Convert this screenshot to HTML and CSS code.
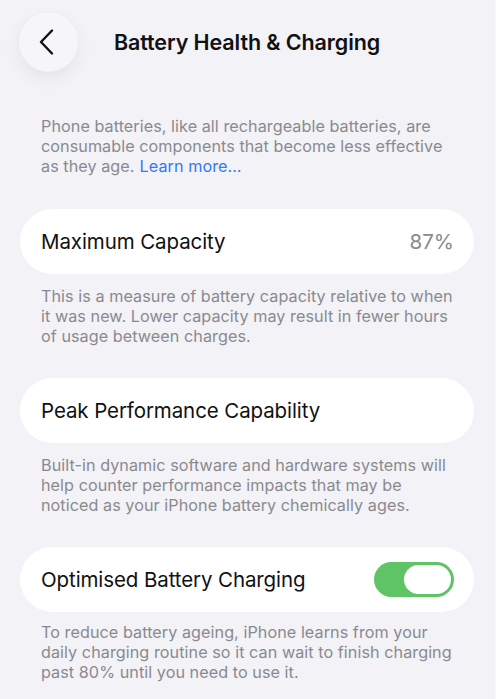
FILE: index.html
```html
<!DOCTYPE html>
<html lang="en">
<head>
    <meta charset="UTF-8">
    <meta name="viewport" content="width=device-width, initial-scale=1.0">
    <title>Battery Health &amp; Charging</title>
    <link rel="stylesheet" href="styles.css">
</head>
<body>
    <div class="screen">
        <header class="nav">
            <button class="back" aria-label="Back">
                <svg width="16" height="26" viewBox="0 0 16 26">
                    <path d="M13 1.5 L2 13 L13 24.5" fill="none" stroke="#111" stroke-width="2.4" stroke-linecap="round" stroke-linejoin="round"/>
                </svg>
            </button>
            <h1 class="title">Battery Health &amp; Charging</h1>
        </header>

        <p class="note intro">Phone batteries, like all rechargeable batteries, are consumable components that become less effective as they age.<a href="#" class="link">Learn more…</a></p>

        <section class="group first">
            <div class="row">
                <span class="label">Maximum Capacity</span>
                <span class="value">87%</span>
            </div>
            <p class="note">This is a measure of battery capacity relative to when it was new. Lower capacity may result in fewer hours of usage between charges.</p>
        </section>

        <section class="group">
            <div class="row">
                <span class="label">Peak Performance Capability</span>
            </div>
            <p class="note">Built-in dynamic software and hardware systems will help counter performance impacts that may be noticed as your iPhone battery chemically ages.</p>
        </section>

        <section class="group">
            <div class="row">
                <span class="label">Optimised Battery Charging</span>
                <span class="toggle on"><span class="knob"></span></span>
            </div>
            <p class="note">To reduce battery ageing, iPhone learns from your daily charging routine so it can wait to finish charging past 80% until you need to use it.</p>
        </section>
    </div>
</body>
</html>
```

FILE: styles.css
```css
html, body {
    margin: 0;
    height: 100%;
}
body {
    background-color: #f2f2f7;
    font-family: Inter, "Open Sans", sans-serif;
    color: #111;
    overflow: hidden;
}
.screen {
    padding: 0 21px 0 20px;
    border-right: 1px solid #f9f9fc;
    box-sizing: border-box;
    width: 496px;
    height: 100%;
}
.nav {
    display: flex;
    align-items: center;
    height: 56px;
    padding-top: 14px;
    position: relative;
}
.back {
    width: 57px;
    height: 57px;
    border-radius: 50%;
    border: none;
    background: #f6f6f8;
    box-shadow: 0 6px 18px rgba(0, 0, 0, 0.07), 0 0 0 1px rgba(255, 255, 255, 0.9);
    display: flex;
    align-items: center;
    justify-content: center;
    padding: 0 3px 0 0;
}
.title {
    position: absolute;
    left: 0;
    right: 0;
    top: 14px;
    line-height: 56px;
    text-align: center;
    margin: 0;
    font-size: 21.5px;
    font-weight: 600;
    letter-spacing: -0.1px;
    pointer-events: none;
}
.note {
    margin: 0;
    padding: 0 21px;
    font-size: 16.2px;
    line-height: 20px;
    color: #8a8a8e;
    letter-spacing: 0.05px;
}
.intro {
    margin-top: 46px;
}
.link {
    color: #3478f6;
    text-decoration: none;
    margin-left: 5px;
}
.group {
    margin-top: 32px;
}
.group.first {
    margin-top: 33px;
}
.group .note {
    margin-top: 12px;
}
.group:last-child .note {
    margin-top: 10px;
}
.row {
    background: #fff;
    border-radius: 33px;
    height: 65px;
    display: flex;
    align-items: center;
    justify-content: space-between;
    padding: 0 20px 0 21px;
}
.label {
    font-size: 20.5px;
    letter-spacing: -0.1px;
}
.value {
    font-size: 20.5px;
    color: #8a8a8e;
}
.toggle {
    width: 80px;
    height: 35px;
    border-radius: 18px;
    background: #5ec466;
    box-sizing: border-box;
    padding: 3px;
    display: flex;
    justify-content: flex-end;
}
.knob {
    width: 47px;
    height: 29px;
    border-radius: 15px;
    background: #fff;
}
```
